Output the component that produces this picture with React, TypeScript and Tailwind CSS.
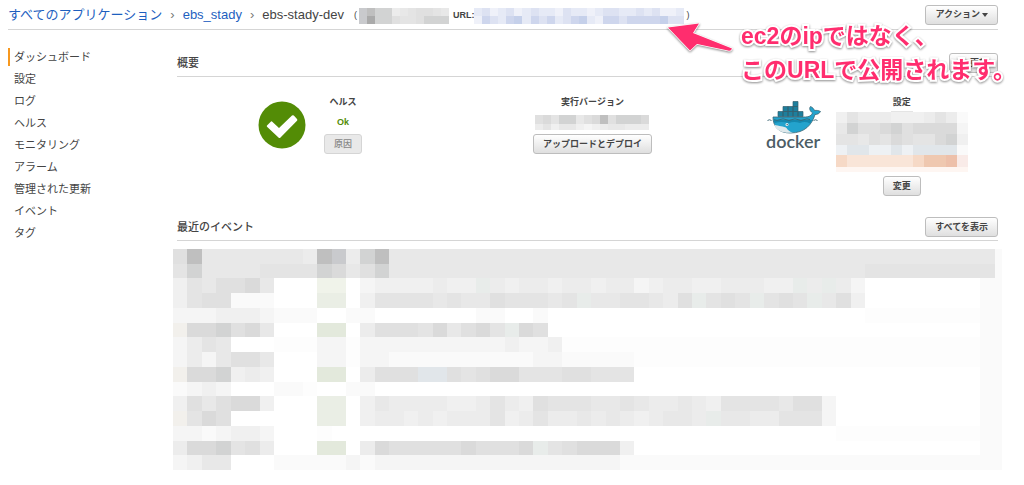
import React from "react";
import { RotateCw } from "lucide-react";

const palette: Record<string, string> = {
  ".": "#ffffff", "0": "#fdfdfd", "1": "#fafafa", "2": "#f5f5f5", "3": "#f0f0f0",
  "4": "#ececec", "5": "#e8e8e8", "6": "#e4e4e4", "7": "#e0e0e0", "8": "#dadada",
  "9": "#d2d3d3", A: "#bfbfbf", B: "#c9cacd", D: "#aaaaaa",
  g: "#e3e9dc", h: "#f0f3ea", i: "#eaeee5", w: "#f2f0ec", t: "#e8ecea",
  k: "#eff1f9", l: "#e6eaf6", m: "#dde2f2", n: "#ced6ed", o: "#c5d0ea",
  p: "#f6d9c6", q: "#f9e5d8", r: "#efc8b0", s: "#f9ebe8", u: "#edc0aa", v: "#fef6f2",
  x: "#e1e6ea", y: "#eef1f4",
};

type MosaicProps = {
  rows: string[];
  cell: number;
  columns: number;
  heights: number[];
  label: string;
  className: string;
};

function Mosaic({ rows, cell, columns, heights, label, className }: MosaicProps) {
  const total = heights.reduce((a, b) => a + b, 0);
  let y = 0;
  return (
    <svg
      role="img"
      aria-label={label}
      className={className}
      viewBox={`0 0 ${columns * cell} ${total}`}
      preserveAspectRatio="none"
      shapeRendering="crispEdges"
    >
      {rows.map((row, r) => {
        const top = y;
        y += heights[r];
        return row.split("").map((c, i) =>
          c === "." ? null : (
            <rect key={`${r}-${i}`} x={i * cell} y={top} width={cell} height={heights[r]} fill={palette[c]} />
          ),
        );
      })}
    </svg>
  );
}

const line = (cells: string, fill: string) => cells.padEnd(56, fill) + "11";

const eventRows = [
  "7A55555554AB49A".padEnd(57, "5") + "1",
  "6955556666985795".padEnd(48, "5") + "6666666661",
  line("3657785...hh.23333433t434434434423443344433t4t42", "."),
  line("3677111...ii.366665655766656t5566547t676t676t573", "."),
  line("2223332111..11.......11..1......................", "0"),
  line("w889785...gg.4777685786t87", "."),
  line("2465...000220222222222232230", "0"),
  line("2425775...2202211111111112211111", "0"),
  line("w889343...gg.4777xx767886667766684".slice(0, 32), "."),
  line("1232...110..11", "."),
  line("3757883...ii.354444334643766655654454366665772", "."),
  line("w687......ii.344343444634644545434554t55446662", "."),
  line("2212332...0...................................", "0"),
  line("4889674...gg.487777787778t678883", "."),
  line("2355...111112122222222222222222", "1"),
];

const navItems = [
  "ダッシュボード",
  "設定",
  "ログ",
  "ヘルス",
  "モニタリング",
  "アラーム",
  "管理された更新",
  "イベント",
  "タグ",
];

function Button({ children, disabled = false }: { children: React.ReactNode; disabled?: boolean }) {
  return (
    <button
      type="button"
      disabled={disabled}
      className="flex h-5 shrink-0 items-center gap-0.5 whitespace-nowrap rounded-[3px] border border-[#bdbdbd] bg-linear-to-b from-white to-[#dfdfdf] px-[9px] text-[9px] leading-none font-bold text-[#444] disabled:border-[#d5d5d5] disabled:bg-[#e9e9e9] disabled:bg-none disabled:font-medium disabled:text-[#888]"
    >
      {children}
    </button>
  );
}

function SectionHeader({ title, children }: { title: string; children: React.ReactNode }) {
  return (
    <div className="flex h-6 items-start justify-between border-b border-[#d5d5d5]">
      <h2 className="text-[11px] leading-5 font-medium">{title}</h2>
      {children}
    </div>
  );
}

function DockerLogo() {
  return (
    <svg viewBox="0 0 56 50" className="h-[50px] w-14 shrink-0" role="img" aria-label="docker">
      <path
        d="M12 10.500h5v5h-5zM17 10.500h5v5h-5zM22 10.500h5v5h-5zM27 10.500h5v5h-5zM17 5.500h5v5h-5zM22 5.500h5v5h-5zM27 5.500h5v5h-5zM27 .500h5v5h-5zM32 10.500h5v5h-5z"
        fill="#1d7f9d"
        stroke="#35606e"
        strokeWidth="0.7"
      />
      <path
        d="M7 16H39.500C43 16 45.500 14.500 46.500 12C43.500 9.500 43 7.200 44.500 5.500C46.500 6.300 48 8 48.500 9.500C50.500 9.200 53 9.500 54.500 10.500C53.500 12.500 51.500 13.500 49 13.500C46 23.500 39 32 24.500 32C13 32 7 26 7 16Z"
        fill="#23a3cd"
        stroke="#3a6573"
        strokeWidth="0.8"
      />
      <path d="M7.500 19H46Q45 21 44 22.500Q39 20 34 22Q28 20 23 22Q15 20 8.500 22Z" fill="#1587ad" />
      <path d="M8 23.500C13 25.500 18 25 20.500 27C21.500 29 24 31 27 31.600C17 32.500 10.500 30 8 23.500Z" fill="#dfe9ec" />
      <circle cx="21" cy="23.500" r="1.500" fill="#e9f1f3" />
      <circle cx="21.200" cy="23.600" r="0.700" fill="#2e4650" />
      <path
        d="M1.500 19.500q2-1.500 4 0M47.500 19.500q2-1.500 4 0M8 18.600q3 1.500 6 0t6 0t6 0t6 0t6 0t6 0"
        fill="none"
        stroke="#3a6573"
        strokeWidth="0.9"
      />
      <text x="0" y="47" fill="#4c5d65" fontFamily="Lato, sans-serif" fontWeight="600" fontSize="18">
        docker
      </text>
    </svg>
  );
}

function Annotation() {
  return (
    <div className="pointer-events-none absolute top-[19px] right-2 flex items-start drop-shadow-[0_1px_1px_rgba(0,0,0,0.45)]">
      <svg viewBox="0 0 70 36" className="mt-1 h-9 w-[70px]" aria-hidden="true">
        <path
          d="M1 4.500L32 0.500L26 10L65 25.500Q64 28.500 61 27.500L30 21L23 27.500Z"
          fill="#ff2d6e"
          stroke="#fff"
          strokeWidth="1.500"
          strokeLinejoin="round"
          paintOrder="stroke"
        />
      </svg>
      <p className="ml-1 text-[23px] leading-[34px] font-bold whitespace-nowrap text-[#ff2d6e] [-webkit-text-stroke:4px_white] [paint-order:stroke_fill]">
        ec2のipではなく、
        <br />
        このURLで公開されます。
      </p>
    </div>
  );
}

export default function App() {
  return (
    <div className="relative min-h-screen bg-white pr-[26px] pl-2 font-['Liberation_Sans','Noto_Sans_CJK_JP',sans-serif] text-[#444]">
      <header className="flex h-[30px] items-center justify-between border-b border-[#d5d5d5]">
        <nav aria-label="パンくずリスト" className="flex items-center gap-2 text-[13px] leading-5 whitespace-nowrap">
          <a href="#apps" className="text-[#1e5fbf]">すべてのアプリケーション</a>
          <span className="text-[#777]">›</span>
          <a href="#ebs_stady" className="text-[#1e5fbf]">ebs_stady</a>
          <span className="text-[#777]">›</span>
          <span>ebs-stady-dev</span>
          <span className="flex items-center pl-0.5 text-[9px]">
            <span className="pr-0.5">(</span>
            <Mosaic
              label="環境 ID"
              className="mt-0.5 h-4 w-[90px]"
              cell={8}
              columns={11}
              heights={[8, 8]}
              rows={["BA994567765", "BD997667999"]}
            />
            <span className="pl-1 font-bold">URL:</span>
            <Mosaic
              label="環境 URL"
              className="mt-0.5 h-4 w-[210px]"
              cell={8}
              columns={26}
              heights={[8, 8]}
              rows={["lmklmklmllkmllklmmllmlmkkl", "knmlnolnmnlmnolknnmnnnnomm"]}
            />
            <span className="pl-0.5">)</span>
          </span>
        </nav>
        <Button>
          <span>アクション</span>
          <svg viewBox="0 0 6 4" className="h-1 w-1.5" aria-hidden="true">
            <path d="M0 0h6L3 4z" fill="#444" />
          </svg>
        </Button>
      </header>

      <div className="flex">
        <nav aria-label="環境" className="w-[169px] shrink-0 pt-4">
          <ul>
            {navItems.map((item, i) => (
              <li key={item} className="flex h-[22px] items-center">
                <a
                  href={`#nav-${i}`}
                  aria-current={i === 0 ? "page" : undefined}
                  className="border-l-2 border-transparent pl-1 text-[11px] leading-[18px] aria-[current]:border-[#f7981f]"
                >
                  {item}
                </a>
              </li>
            ))}
          </ul>
        </nav>

        <main className="min-w-0 flex-1 pt-[23px]">
          <SectionHeader title="概要">
            <Button>
              <RotateCw size={9} strokeWidth={3} />
              <span>更新</span>
            </Button>
          </SectionHeader>

          <section className="grid h-[140px] grid-cols-3 items-start pt-4 pl-2.5 text-[9px] font-bold">
            <div className="flex items-start gap-[18px] pl-[71px]">
              <svg viewBox="0 0 48 48" className="mt-2 size-12 shrink-0" role="img" aria-label="Ok">
                <circle cx="24" cy="24" r="23.500" fill="#538c06" />
                <path
                  d="M9 24.500L13 20.500Q13.500 20 14 20.500L21 27L34 14.500Q35 13.800 35.800 14.500L39 18Q39.800 19 39 19.800L22.500 36.500Q21.500 37.500 20.500 36.500L9 25.800Q8.500 25 9 24.500Z"
                  fill="#fff"
                />
              </svg>
              <div className="flex flex-col items-center">
                <h3 className="leading-[18px]">ヘルス</h3>
                <p className="leading-[22px] text-[#538c06]">Ok</p>
                <div className="pt-px">
                  <Button disabled>原因</Button>
                </div>
              </div>
            </div>

            <div className="flex flex-col items-center">
              <h3 className="leading-[18px]">実行バージョン</h3>
              <Mosaic
                label="バージョン"
                className="mt-1 mb-1 h-[15px] w-[114px]"
                cell={8}
                columns={14}
                heights={[9, 6]}
                rows={["78699578A79998", "46355323455444"]}
              />
              <Button>アップロードとデプロイ</Button>
            </div>

            <div className="flex items-start justify-center gap-[14px] pl-2">
              <div className="mt-2">
                <DockerLogo />
              </div>
              <div className="flex flex-col items-center">
                <h3 className="leading-[18px]">設定</h3>
                <Mosaic
                  label="プラットフォーム"
                  className="mb-1 h-[61px] w-[132px]"
                  cell={11}
                  columns={12}
                  heights={[1, 11, 11, 11, 10, 12, 5]}
                  rows={[
                    ".....66.....",
                    "364443334641",
                    "597789788882",
                    "665768766893",
                    "yxxyyxyxxxx1",
                    "pqqqqqqprrus",
                    "vvvvvvvvvvvv",
                  ]}
                />
                <Button>変更</Button>
              </div>
            </div>
          </section>

          <SectionHeader title="最近のイベント">
            <Button>すべてを表示</Button>
          </SectionHeader>
          <div className="-mx-1 pt-2">
            <Mosaic
              label="イベント一覧"
              className="h-[221px] w-full"
              cell={14}
              columns={57.5}
              heights={eventRows.map(() => 14)}
              rows={eventRows}
            />
          </div>
        </main>
      </div>
      <Annotation />
    </div>
  );
}
